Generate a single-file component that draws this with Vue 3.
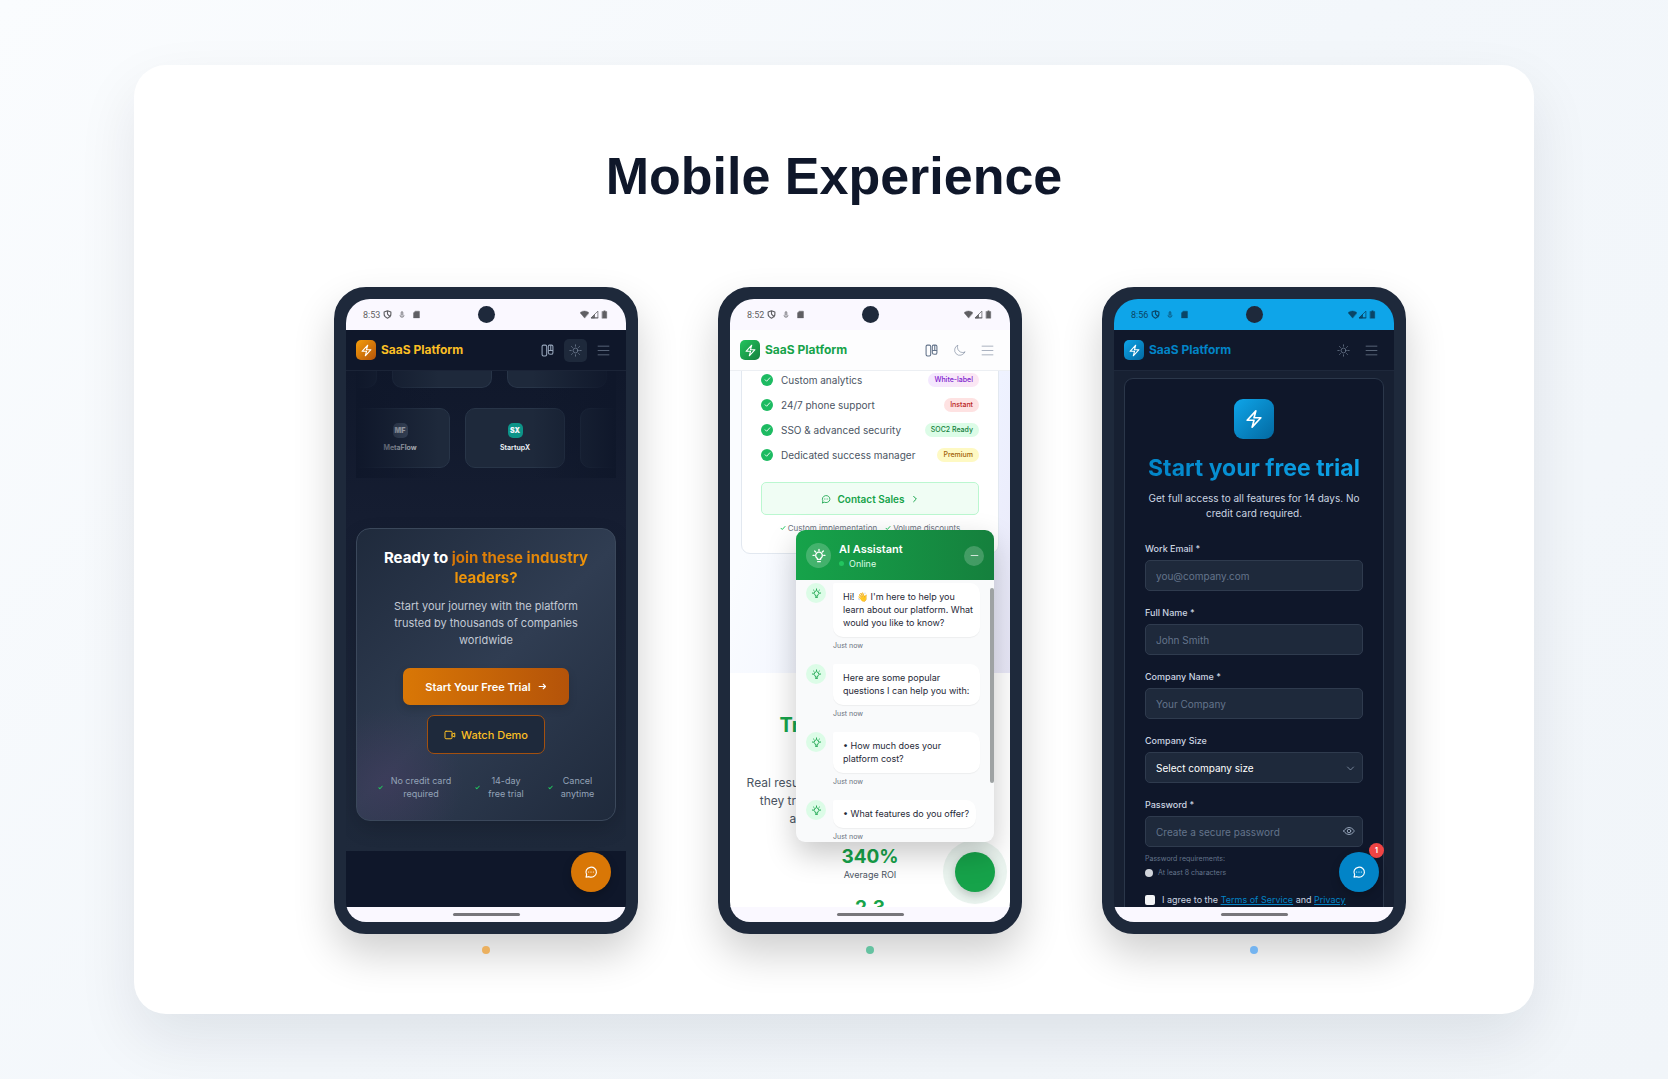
<script setup>
import { h, ref } from 'vue'

const glyphs = {
  bolt: '<path d="M3.75 13.5 14.25 2.25 12 10.5h8.25L9.75 21.75 12 13.5z"/>',
  sun: '<path d="M12 1.500v2.600M19.400 4.600l-1.800 1.800M22.500 12h-2.600M19.400 19.400l-1.800-1.800M12 19.900v2.600M6.400 17.600l-1.800 1.800M4.100 12H1.500M6.400 6.400 4.600 4.600"/><circle cx="12" cy="12" r="4.500"/>',
  moon: '<path d="M21.750 15A9.700 9.700 0 0 1 18 15.750 9.750 9.750 0 0 1 8.250 6c0-1.330.270-2.600.750-3.750A9.750 9.750 0 1 0 21.750 15z"/>',
  menu: '<path d="M2 4h20M2 12h20M2 20h20"/>',
  panels: '<rect x="2" y="2" width="8.500" height="20" rx="2.500"/><path d="M15.500 2h4A2.500 2.500 0 0 1 22 4.500V16a3 3 0 0 1-3 3h-2a3.500 3.500 0 0 1-3.500-3.500V4a2 2 0 0 1 2-2zM13.500 12H22M18 3v9"/>',
  chat: '<path d="M3.500 21l1-4.500A9 8.500 0 1 1 8.500 20z"/><path d="M8 12h.01M12 12h.01M16 12h.01"/>',
  arrow: '<path d="M3 12h17M14 6l6 6-6 6"/>',
  video: '<rect x="2" y="4.500" width="14" height="15" rx="2"/><path d="M16 10.500 21.500 8v8L16 13.500"/>',
  check: '<path d="M4 13l5 5L20 6"/>',
  chevronRight: '<path d="M8 4l8 8-8 8"/>',
  chevronDown: '<path d="M4 8l8 8 8-8"/>',
  bulb: '<path d="M9.500 17v-1.500a5 5 0 1 1 5 0V17zM10 20.500h4M12 2v2M3 11h2M19 11h2M5.500 4.500 7 6M18.500 4.500 17 6"/>',
  minus: '<path d="M3 12h18"/>',
  eye: '<path d="M1.500 12S5 5 12 5s10.500 7 10.500 7S19 19 12 19 1.500 12 1.500 12z"/><circle cx="12" cy="12" r="3.500"/>',
  shield: '<path d="M12 2 3 5.500v6c0 5 4 8.500 9 10.500 5-2 9-5.500 9-10.500v-6zM12 3v8l7 7"/>',
  plug: '<path d="M12 2v7M8 9h8M6 13a6 6 0 1 0 12 0M12 11v6M9 5l3-3 3 3"/>',
  sdcard: '<path d="M9 3h10a1 1 0 0 1 1 1v17H4V8z" fill="currentColor"/>',
  wifi: '<path d="M12 21 0 7a18 18 0 0 1 24 0z" fill="currentColor"/>',
  signal: '<path d="M21 4v17H4z"/><path d="M12 13v8H4zM4 21h17" fill="currentColor"/>',
  battery: '<path d="M6 4h4V2h4v2h4v18H6z" fill="currentColor"/>'
}

const Icon = (props) =>
  h('svg', {
    viewBox: '0 0 24 24',
    width: props.size,
    height: props.size,
    fill: 'none',
    stroke: 'currentColor',
    'stroke-width': props.stroke || 2,
    'stroke-linecap': 'round',
    'stroke-linejoin': 'round',
    'aria-hidden': 'true',
    innerHTML: glyphs[props.name]
  })
Icon.props = ['name', 'size', 'stroke']

const phones = [
  { id: 'amber', time: '8:53', tools: ['panels', 'sun', 'menu'] },
  { id: 'green', time: '8:52', tools: ['panels', 'moon', 'menu'] },
  { id: 'blue', time: '8:56', tools: ['sun', 'menu'] }
]
const toolNames = { panels: 'Layout', sun: 'Light mode', moon: 'Dark mode', menu: 'Menu' }

const perks = [['No credit card', 'required'], ['14-day', 'free trial'], ['Cancel', 'anytime']]

const features = [
  { text: 'Custom analytics', tag: 'White-label', tone: 'violet' },
  { text: '24/7 phone support', tag: 'Instant', tone: 'red' },
  { text: 'SSO & advanced security', tag: 'SOC2 Ready', tone: 'mint' },
  { text: 'Dedicated success manager', tag: 'Premium', tone: 'yellow' }
]

const messages = [
  ["Hi! 👋 I'm here to help you", 'learn about our platform. What', 'would you like to know?'],
  ['Here are some popular', 'questions I can help you with:'],
  ['• How much does your', 'platform cost?'],
  ['• What features do you offer?']
]

const email = ref('')
const fullName = ref('')
const company = ref('')
const password = ref('')
</script>

<template>
  <main class="page">
    <section class="showcase">
      <h1>Mobile Experience</h1>
      <div class="phones">
        <div v-for="p in phones" :key="p.id" class="device" :class="p.id">
          <article class="phone">
            <div class="status">
              <span class="status-left">
                <span class="time">{{ p.time }}</span>
                <Icon name="shield" size="9" stroke="3" />
                <Icon name="plug" size="8" stroke="2" />
                <Icon name="sdcard" size="9" stroke="1" />
              </span>
              <i class="camera"></i>
              <span class="status-right">
                <Icon name="wifi" size="9" stroke="1" />
                <Icon name="signal" size="9" />
                <Icon name="battery" size="9" stroke="1" />
              </span>
            </div>

            <header class="nav">
              <span class="logo"><Icon name="bolt" size="13" /></span>
              <strong class="brand">SaaS Platform</strong>
              <button
                v-for="t in p.tools"
                :key="t"
                class="tool"
                :class="t"
                type="button"
                :aria-label="toolNames[t]"
              >
                <Icon :name="t" size="13" :stroke="t === 'panels' ? 2 : 1" />
              </button>
            </header>

            <div v-if="p.id === 'amber'" class="body">
              <section class="landing">
                <div class="marquee">
                  <div class="track upper">
                    <span v-for="n in 4" :key="n" class="tile"></span>
                  </div>
                  <div class="track lower">
                    <span class="tile"><b class="mono grey">MF</b>MetaFlow</span>
                    <span class="tile"><b class="mono teal">SX</b>StartupX</span>
                    <span class="tile"></span>
                  </div>
                </div>
                <div class="cta">
                  <h2>Ready to <em>join these industry<br />leaders?</em></h2>
                  <p>
                    Start your journey with the platform<br />trusted by thousands of companies<br />worldwide
                  </p>
                  <button class="primary" type="button">
                    Start Your Free Trial <Icon name="arrow" size="9" stroke="3" />
                  </button>
                  <button class="secondary" type="button">
                    <Icon name="video" size="12" /> Watch Demo
                  </button>
                  <ul class="perks">
                    <li v-for="k in perks" :key="k[0]">
                      <Icon name="check" size="5" stroke="5" />
                      <span>{{ k[0] }}<br />{{ k[1] }}</span>
                    </li>
                  </ul>
                </div>
              </section>
              <button class="fab" type="button" aria-label="Open chat"><Icon name="chat" size="14" /></button>
            </div>

            <div v-else-if="p.id === 'green'" class="body">
              <section class="pricing">
                <div class="plan">
                  <ul class="features">
                    <li v-for="f in features" :key="f.text">
                      <i class="tick"><Icon name="check" size="7" stroke="3" /></i>
                      <span>{{ f.text }}</span>
                      <b class="tag" :class="f.tone">{{ f.tag }}</b>
                    </li>
                  </ul>
                  <button class="contact" type="button">
                    <Icon name="chat" size="10" /> Contact Sales <Icon name="chevronRight" size="8" stroke="3" />
                  </button>
                  <p class="notes">
                    <span><Icon name="check" size="6" stroke="4" /> Custom implementation</span>
                    <span><Icon name="check" size="6" stroke="4" /> Volume discounts</span>
                  </p>
                </div>
              </section>
              <section class="results">
                <h2>Trusted by Teams.</h2>
                <p>
                  Real results from real companies. Hear how<br />they transformed their own businesses<br />at any global scale each day
                </p>
                <strong>340%</strong>
                <span>Average ROI</span>
                <strong>2.3</strong>
              </section>
              <button class="fab" type="button" aria-label="Close chat"></button>
              <aside class="chat">
                <header>
                  <i class="bot"><Icon name="bulb" size="16" /></i>
                  <div>
                    <h3>AI Assistant</h3>
                    <span class="online">Online</span>
                  </div>
                  <button type="button" aria-label="Minimise"><Icon name="minus" size="9" /></button>
                </header>
                <div class="log">
                  <div v-for="(m, i) in messages" :key="i" class="message">
                    <i class="avatar"><Icon name="bulb" size="11" /></i>
                    <div>
                      <p :class="{ wide: m.length > 1 }"><template v-for="(line, j) in m" :key="j"><br v-if="j" />{{ line }}</template></p>
                      <time>Just now</time>
                    </div>
                  </div>
                  <i class="thumb"></i>
                </div>
              </aside>
            </div>

            <div v-else class="body">
              <form class="signup" @submit.prevent>
                <span class="mark"><Icon name="bolt" size="20" /></span>
                <h2>Start your free trial</h2>
                <p class="lead">Get full access to all features for 14 days. No<br />credit card required.</p>
                <div class="field">
                  <label for="email">Work Email *</label>
                  <input id="email" v-model="email" type="email" placeholder="you@company.com" />
                </div>
                <div class="field">
                  <label for="name">Full Name *</label>
                  <input id="name" v-model="fullName" type="text" placeholder="John Smith" />
                </div>
                <div class="field">
                  <label for="company">Company Name *</label>
                  <input id="company" v-model="company" type="text" placeholder="Your Company" />
                </div>
                <div class="field">
                  <label for="size">Company Size</label>
                  <select id="size"><option>Select company size</option></select>
                  <Icon class="inside" name="chevronDown" size="9" />
                </div>
                <div class="field last">
                  <label for="password">Password *</label>
                  <input id="password" v-model="password" type="password" placeholder="Create a secure password" />
                  <Icon class="inside" name="eye" size="12" />
                </div>
                <p class="rules">Password requirements:</p>
                <p class="rules rule"><i></i>At least 8 characters</p>
                <div class="agree">
                  <input id="agree" type="checkbox" />
                  <label for="agree">I agree to the <a href="#terms">Terms of Service</a> and <a href="#privacy">Privacy</a></label>
                </div>
              </form>
              <button class="fab" type="button" aria-label="Open chat">
                <Icon name="chat" size="14" /><b class="count">1</b>
              </button>
            </div>

            <footer class="gesture"><i></i></footer>
          </article>
          <i class="dot"></i>
        </div>
      </div>
    </section>
  </main>
</template>

<style>
body {
  margin: 0;
}
</style>

<style scoped>
* {
  box-sizing: border-box;
}

h1, h2, h3, p, ul {
  margin: 0;
  padding: 0;
  list-style: none;
}

button, input, select {
  margin: 0;
  padding: 0;
  border: 0;
  background: none;
  font-family: inherit;
}

i, em {
  font-style: normal;
}

svg {
  display: block;
  flex: none;
}

.page {
  min-height: 100vh;
  padding: 65px 80px;
  background: linear-gradient(135deg, #fafcfe 0%, #f3f7fb 50%, #f1f5f9 100%);
  font-family: Inter, sans-serif;
}

.showcase {
  max-width: 1400px;
  margin: 0 auto;
  padding: 80px 80px 60px;
  border-radius: 32px;
  background: #fff;
  box-shadow: 0 25px 60px rgba(15, 23, 42, 0.09);
}

h1 {
  color: #0f172a;
  font: 700 52px/62px "Liberation Sans", Arial, sans-serif;
  text-align: center;
}

.phones {
  display: flex;
  justify-content: center;
  gap: 80px;
  margin-top: 80px;
  padding-left: 72px;
}

.device {
  display: flex;
  flex-direction: column;
  align-items: center;
  gap: 12px;
}

.dot {
  width: 8px;
  height: 8px;
  border-radius: 50%;
  background: var(--dot);
}

.phone {
  display: flex;
  flex-direction: column;
  width: 304px;
  aspect-ratio: 304 / 647;
  overflow: hidden;
  border: 12px solid #1e293b;
  border-radius: 32px;
  background: #1e293b;
  box-shadow: 0 20px 40px rgba(0, 0, 0, 0.19);
}

.amber {
  --status: #faf8ff;
  --dot: #ebb05f;
  --nav: #0f172a;
  --line: #1b2437;
  --brand: #fbbf24;
  --logo: linear-gradient(135deg, #f59e0b, #b45309);
  --fab: #d97706;
}

.green {
  --status: #faf8ff;
  --dot: #65c2a1;
  --nav: #fdfdfe;
  --line: #eceff3;
  --brand: #16a34a;
  --logo: linear-gradient(135deg, #22c55e, #15803d);
  --fab: #16a34a;
}

.blue {
  --status: #0ea5e9;
  --dot: #74b4f0;
  --nav: #10182b;
  --line: #1e283b;
  --brand: #0284c7;
  --logo: linear-gradient(135deg, #0ea5e9, #0369a1);
  --fab: #0284c7;
}

.status {
  display: grid;
  grid-template-columns: 1fr auto 1fr;
  align-items: center;
  flex: none;
  height: 31px;
  padding: 0 17px;
  border-radius: 24px 24px 0 0;
  background: var(--status);
  color: #5f5f63;
}

.blue .status {
  color: #0a4566;
}

.status-left {
  display: flex;
  align-items: center;
  gap: 6px;
}

.time {
  margin-right: -3px;
  font: 400 9px/12px Roboto, sans-serif;
}

.status-right {
  display: flex;
  justify-content: flex-end;
  gap: 1px;
}

.camera {
  width: 17px;
  height: 17px;
  border-radius: 50%;
  background: #1e293b;
}

.nav {
  display: flex;
  align-items: center;
  gap: 5px;
  flex: none;
  height: 41px;
  padding: 0 11px 0 10px;
  border-bottom: 1px solid var(--line);
  background: var(--nav);
}

.logo {
  display: grid;
  place-items: center;
  width: 20px;
  height: 20px;
  border-radius: 5px;
  background: var(--logo);
  color: #fff;
}

.brand {
  margin-right: auto;
  color: var(--brand);
  font-size: 12px;
  line-height: 20px;
}

.tool {
  display: grid;
  place-items: center;
  width: 23px;
  height: 23px;
  border-radius: 5px;
  color: #94a3b8;
}

.green .tool {
  color: #64748b;
}

.amber .sun {
  background: #1e293b;
}

.body {
  position: relative;
  flex: 1;
  min-height: 0;
  overflow: hidden;
  background: #0f172a;
}

.gesture {
  display: grid;
  place-items: center;
  flex: none;
  height: 15px;
  border-radius: 0 0 24px 24px;
  background: #faf8ff;
}

.gesture i {
  width: 67px;
  height: 3px;
  border-radius: 2px;
  background: #77767b;
}

.green .gesture {
  box-shadow: 0 -1px #e2e5ec;
}

.fab {
  position: absolute;
  right: 15px;
  bottom: 15px;
  display: grid;
  place-items: center;
  width: 40px;
  height: 40px;
  border-radius: 50%;
  background: var(--fab);
  box-shadow: 0 4px 10px rgba(0, 0, 0, 0.2);
  color: #fff;
}

.green .fab {
  box-shadow: 0 0 0 12px rgba(22, 130, 74, 0.09), 0 4px 10px rgba(0, 0, 0, 0.2);
}

.landing {
  padding: 0 10px 30px;
  background: linear-gradient(#10182b, #151d31 30%, #1e293b);
}

.marquee {
  position: relative;
  height: 107px;
  overflow: hidden;
}

.marquee::after {
  content: "";
  position: absolute;
  inset: 0;
  background: linear-gradient(90deg, #0f172a, transparent 32%, transparent 68%, #0f172a);
}

.track {
  display: flex;
  gap: 15px;
}

.upper {
  margin-left: -79px;
}

.lower {
  margin: 20px 0 0 -6px;
}

.tile {
  display: flex;
  flex-direction: column;
  align-items: center;
  justify-content: center;
  gap: 5px;
  flex: none;
  width: 100px;
  height: 60px;
  border: 1px solid #283548;
  border-radius: 10px;
  background: #1e293b;
  color: #f1f5f9;
  font-size: 7px;
  font-weight: 600;
  line-height: 10px;
}

.upper .tile {
  height: 17px;
  border-top: 0;
  border-radius: 0 0 10px 10px;
}

.mono {
  width: 15px;
  border-radius: 5px;
  font-size: 7px;
  line-height: 15px;
  text-align: center;
}

.grey {
  background: #475569;
}

.teal {
  background: #0d9488;
}

.cta {
  display: flex;
  flex-direction: column;
  align-items: center;
  margin-top: 50px;
  padding: 19px 12px;
  border: 1px solid #3b485b;
  border-radius: 14px;
  background:
    radial-gradient(circle at 12% 87%, rgba(88, 60, 110, 0.3), transparent 22%),
    linear-gradient(135deg, #1f2a3c 0%, #303d52 50%, #1f2a3c 100%);
  box-shadow: 0 8px 20px rgba(0, 0, 0, 0.15);
  text-align: center;
}

.cta h2 {
  color: #fff;
  font-size: 15px;
  line-height: 20px;
}

.cta em {
  background: linear-gradient(90deg, #d97706, #f59e0b);
  background-clip: text;
  color: transparent;
}

.cta p {
  margin-top: 10px;
  color: #c3cad5;
  font-size: 11px;
  line-height: 17px;
}

.primary, .secondary {
  display: flex;
  align-items: center;
  justify-content: center;
  border-radius: 7px;
  font-size: 11px;
}

.primary {
  gap: 7px;
  width: 166px;
  height: 37px;
  margin-top: 19px;
  background: linear-gradient(90deg, #d97706, #b45309);
  box-shadow: 0 4px 8px rgba(0, 0, 0, 0.15);
  color: #fff;
  font-weight: 600;
}

.secondary {
  gap: 5px;
  width: 118px;
  height: 39px;
  margin-top: 10px;
  border: 1px solid #a3500f;
  background: #1e293b;
  color: #fbbf24;
  font-weight: 500;
}

.perks {
  display: flex;
  justify-content: center;
  gap: 24px;
  margin-top: 20px;
  margin-bottom: 1px;
  color: #94a3b8;
  font-size: 9px;
  line-height: 13px;
}

.perks li {
  display: flex;
  align-items: center;
  gap: 8px;
}

.perks svg {
  color: #22c55e;
}

.green .body {
  background: #fff;
}

.pricing {
  height: 302px;
  padding: 0 11px;
  background: linear-gradient(110deg, #fafcff 20%, #eef2ff 70%, #e9e8f8);
}

.plan {
  margin-top: -20px;
  padding: 15px 19px;
  border: 1px solid #e2e8f0;
  border-radius: 9px;
  background: #fff;
}

.pricing::before {
  content: "";
  display: table;
}

.features li {
  display: flex;
  align-items: center;
  gap: 8px;
  height: 25px;
  color: #4b5563;
  font-size: 10px;
}

.tick {
  display: grid;
  place-items: center;
  width: 12px;
  height: 12px;
  border-radius: 50%;
  background: #1dbb62;
  color: #fff;
}

.tag {
  margin-left: auto;
  padding: 0 6px;
  border-radius: 7px;
  font-size: 7px;
  font-weight: 500;
  line-height: 14px;
}

.violet {
  background: linear-gradient(90deg, #f3e8ff, #fce7f3);
  color: #7e22ce;
}

.red {
  background: #fee2e2;
  color: #b91c1c;
}

.mint {
  background: #dcfce7;
  color: #15803d;
}

.yellow {
  background: #fef9c3;
  color: #a16207;
}

.contact {
  display: flex;
  align-items: center;
  justify-content: center;
  gap: 6px;
  width: 100%;
  height: 33px;
  margin-top: 15px;
  border: 1px solid #bbf7d0;
  border-radius: 5px;
  background: #f0fdf4;
  color: #16a34a;
  font-size: 10px;
  font-weight: 600;
}

.notes {
  display: flex;
  justify-content: center;
  gap: 8px;
  margin: 7px 0 4px;
  color: #6b7280;
  font-size: 8px;
  line-height: 12px;
}

.notes span {
  display: flex;
  align-items: center;
  gap: 2px;
}

.notes svg {
  color: #22c55e;
}

.results {
  display: flex;
  flex-direction: column;
  align-items: center;
  padding-top: 40px;
  text-align: center;
  white-space: nowrap;
}

.results h2, .results strong {
  color: #16a34a;
  font-size: 19px;
  font-weight: 700;
  line-height: 24px;
}

.results h2 {
  font-size: 20px;
}

.results p {
  margin: 37px 0 17px;
  color: #4b5563;
  font-size: 12px;
  line-height: 18px;
}

.results span {
  margin-bottom: 15px;
  color: #4b5563;
  font-size: 9px;
  line-height: 12px;
}

.chat {
  position: absolute;
  top: 159px;
  right: 16px;
  display: flex;
  flex-direction: column;
  width: 198px;
  height: 312px;
  overflow: hidden;
  border-radius: 9px;
  background: #f9fafb;
  box-shadow: 0 12px 30px rgba(0, 0, 0, 0.22);
}

.chat header {
  display: flex;
  align-items: center;
  gap: 8px;
  flex: none;
  height: 50px;
  padding: 1px 10px 0;
  background: linear-gradient(90deg, #16a34a, #15803d);
  color: #fff;
}

.bot, .chat button {
  display: grid;
  place-items: center;
  border-radius: 50%;
  background: rgba(255, 255, 255, 0.2);
  color: #fff;
}

.bot {
  width: 25px;
  height: 25px;
}

.chat button {
  width: 20px;
  height: 20px;
  margin-left: auto;
}

.chat h3 {
  font-size: 11px;
  font-weight: 600;
  line-height: 16px;
}

.online {
  display: flex;
  align-items: center;
  gap: 5px;
  color: #dcfce7;
  font-size: 9px;
  line-height: 14px;
}

.online::before {
  content: "";
  width: 5px;
  height: 5px;
  border-radius: 50%;
  background: #22c55e;
}

.log {
  position: relative;
  display: flex;
  flex-direction: column;
  gap: 13px;
  padding: 3px 14px 0 10px;
}

.message {
  display: flex;
  gap: 7px;
}

.avatar {
  display: grid;
  place-items: center;
  flex: none;
  width: 20px;
  height: 20px;
  border-radius: 50%;
  background: #dcfce7;
  color: #16a34a;
}

.message p {
  width: fit-content;
  padding: 7px 7px 8px 10px;
  border-radius: 2px 10px 10px 10px;
  background: #fff;
  box-shadow: 0 1px 1px rgba(0, 0, 0, 0.05);
  color: #1f2937;
  font-size: 9px;
  line-height: 13px;
  white-space: nowrap;
}

.message .wide {
  width: 147px;
}

.message time {
  display: block;
  margin-top: 4px;
  color: #6b7280;
  font-size: 7px;
  line-height: 10px;
}

.thumb {
  position: absolute;
  top: 8px;
  right: 0;
  width: 4px;
  height: 195px;
  border-radius: 2px;
  background: #9ea2a3;
}

.blue .body {
  background: #172032;
}

.signup {
  margin: 7px 10px 0;
  padding: 20px 20px 40px;
  border: 1px solid #2b374a;
  border-radius: 9px;
  background: #0f172a;
}

.mark {
  display: grid;
  place-items: center;
  width: 40px;
  height: 40px;
  margin: 0 auto;
  border-radius: 9px;
  background: var(--logo);
  color: #fff;
}

.signup h2 {
  margin: 15px -4px 0;
  background: linear-gradient(90deg, #0284c7, #0ea5e9);
  background-clip: text;
  color: transparent;
  font-size: 23px;
  line-height: 28px;
  text-align: center;
  white-space: nowrap;
}

.lead {
  margin: 9px 0 22px;
  color: #cbd5e1;
  font-size: 10px;
  line-height: 15px;
  text-align: center;
  white-space: nowrap;
}

.field {
  position: relative;
  margin-bottom: 16px;
}

.field.last {
  margin-bottom: 6px;
}

.field label {
  display: block;
  margin-bottom: 5px;
  color: #cbd5e1;
  font-size: 9px;
  font-weight: 500;
  line-height: 12px;
}

.field input, .field select {
  display: block;
  width: 100%;
  height: 31px;
  padding: 0 10px;
  border: 1px solid #2f3b4e;
  border-radius: 5px;
  appearance: none;
  background: #1e293b;
  color: #fff;
  font-size: 10px;
}

.field input::placeholder {
  color: #64748b;
}

.inside {
  position: absolute;
  right: 8px;
  bottom: 10px;
  color: #94a3b8;
}

.rules {
  color: #64748b;
  font-size: 7px;
  line-height: 12px;
}

.rule {
  display: flex;
  align-items: center;
  gap: 5px;
  margin-top: 2px;
}

.rule i {
  width: 8px;
  height: 8px;
  border-radius: 50%;
  background: #d1d5db;
}

.agree {
  display: flex;
  align-items: center;
  gap: 7px;
  margin-top: 15px;
  color: #cbd5e1;
  font-size: 9px;
  line-height: 12px;
  white-space: nowrap;
}

.agree input {
  width: 10px;
  height: 10px;
  border-radius: 2px;
  appearance: none;
  background: #f3f4f6;
}

.agree a {
  color: #0284c7;
}

.count {
  position: absolute;
  top: -9px;
  right: -5px;
  width: 15px;
  border-radius: 50%;
  background: #ef4444;
  font-size: 7px;
  line-height: 15px;
}
</style>
